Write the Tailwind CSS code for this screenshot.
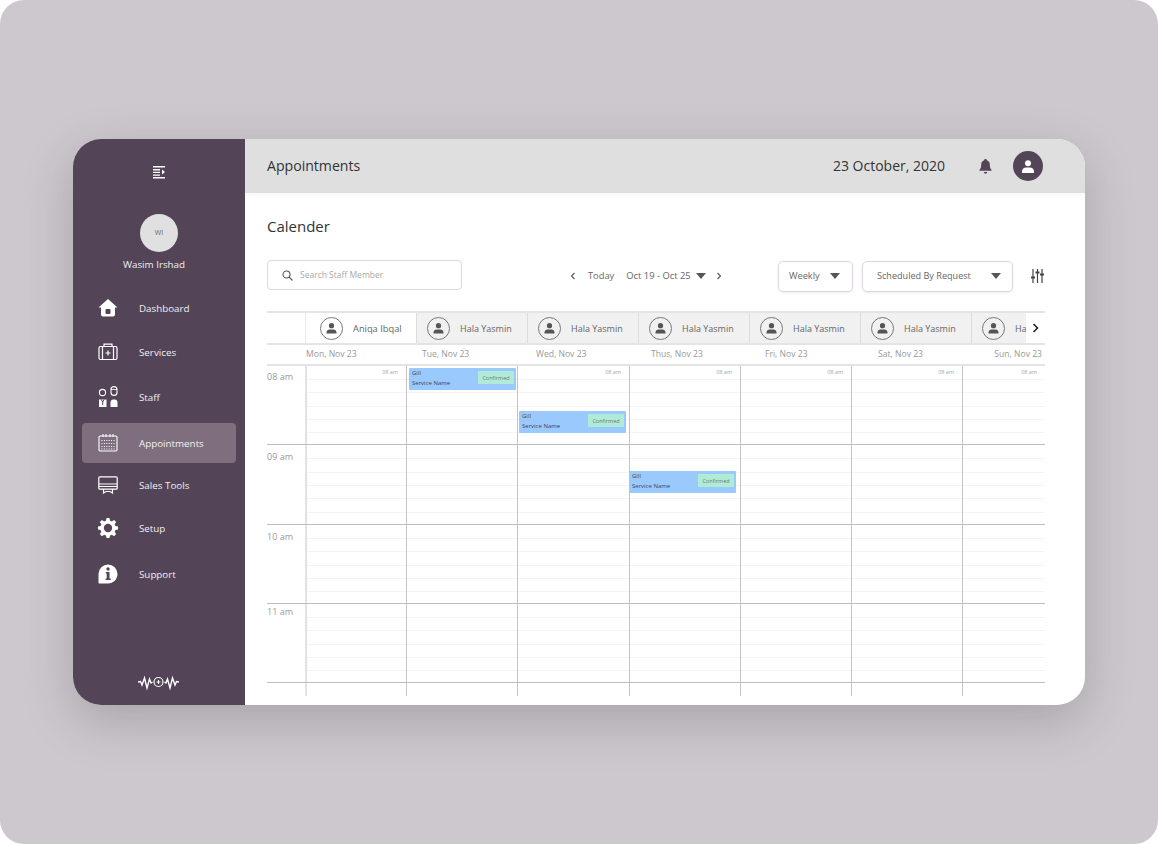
<!DOCTYPE html>
<html lang="en">
<head>
  <meta charset="UTF-8"/>
  <script src="https://cdn.jsdelivr.net/npm/@tailwindcss/browser@4"></script>
  <title>Appointments</title>
</head>
<body class="bg-white font-['Open_Sans',sans-serif] overflow-hidden">
  <div class="w-[1158px] h-[844px] bg-[#cdc8ce] rounded-[24px] pt-[139px] pl-[73px] overflow-hidden">
    <div class="w-[1012px] h-[566px] rounded-[28px] bg-white flex overflow-hidden shadow-[0_16px_50px_rgba(40,30,40,0.22)]">

      <!-- Sidebar -->
      <aside class="w-[172px] shrink-0 bg-[#534557] text-white flex flex-col items-center relative">
        <svg class="mt-[27px]" width="14" height="13" viewBox="0 0 14 13" fill="#fff"><path d="M1 0h12v1.4H1zM1 3h7v1.4H1zM1 5.7h7v1.4H1zM1 8.4h7v1.4H1zM1 11h12v1.4H1z"/><path d="M10 3.4l3 2.6-3 2.6z"/></svg>
        <div class="mt-[35px] w-[38px] h-[38px] rounded-full bg-[#e0e0e0] flex items-center justify-center text-[7px] text-[#666]">WI</div>
        <div class="mt-[5px] mr-[10px] text-[9.800px] leading-[16px] text-[#f2eff2]">Wasim Irshad</div>

        <nav class="mt-[15px] w-full text-[9.800px] text-[#f2eff2]">
          <a class="flex items-center h-[40px] mx-[9px] pl-[16px] rounded-[4px]">
            <svg width="20" height="20" viewBox="0 0 20 20" fill="#fff"><path d="M10 1L0.5 9.5h2.5v7c0 1.2.8 2 2 2h10c1.2 0 2-.8 2-2v-7h2.5z"/><rect x="7.5" y="11" width="5" height="5" rx="1" fill="#534557"/></svg>
            <span class="ml-[21px] mt-[2px]">Dashboard</span>
          </a>
          <a class="flex items-center h-[40px] mt-[4px] mx-[9px] pl-[16px] rounded-[4px]">
            <svg width="20" height="18" viewBox="0 0 20 18" fill="none" stroke="#fff" stroke-width="1.2"><rect x="1" y="3.5" width="18" height="13" rx="1.5"/><path d="M6 1.2h8v2.3H6zM4.5 3.5v13M15.500 3.5v13M10 7.500v5M7.500 10h5"/></svg>
            <span class="ml-[21px] mt-[2px]">Services</span>
          </a>
          <a class="flex items-center h-[40px] mt-[5px] mx-[9px] pl-[16px] rounded-[4px]">
            <svg width="20" height="22" viewBox="0 0 20 22" fill="none"><circle cx="4.500" cy="6.500" r="3.100" stroke="#fff" stroke-width="1.100"/><rect x="13" y=".6" width="6" height="8.800" rx="3" stroke="#fff" stroke-width="1.100"/><path d="M13 3.500h6" stroke="#fff" stroke-width=".8"/><path d="M1 13.500h7.500V21H1z" fill="#fff"/><path d="M3.200 13.500l1.500 2.500 1.500-2.500M4.700 16v3" stroke="#534557"/><path d="M12.500 21v-4.500c0-2 1.300-3 2.500-3h2c1.200 0 2.500 1 2.500 3V21z" fill="#fff"/></svg>
            <span class="ml-[21px] mt-[2px]">Staff</span>
          </a>
          <a class="flex items-center h-[40px] mt-[6px] mx-[9px] pl-[16px] rounded-[4px] bg-[#7f6f7e]">
            <svg width="20" height="18" viewBox="0 0 20 18" fill="none" stroke="#fff"><rect x="1" y="2" width="18" height="15" rx="1.200" stroke-width="1.100"/><path d="M5 0v3M8 0v3M12 0v3M15 0v3" stroke-width="1"/><path d="M3.500 6.500h13M3.500 9.500h13M3.500 12.500h13M3.500 15h13" stroke-width="1" stroke-dasharray="1 1.400"/></svg>
            <span class="ml-[21px] mt-[2px]">Appointments</span>
          </a>
          <a class="flex items-center h-[40px] mt-[2px] mx-[9px] pl-[16px] rounded-[4px]">
            <svg width="20" height="18" viewBox="0 0 20 18" fill="none" stroke="#fff"><rect x=".8" y=".8" width="18.400" height="12.400" rx="1" stroke-width="1.200"/><path d="M.8 8h18.400M.8 10.500h18.400" stroke-width="1.200"/><path d="M5.500 13v4l2.500-1.500h4L14.500 17v-4" stroke-width="1.200"/></svg>
            <span class="ml-[21px] mt-[2px]">Sales Tools</span>
          </a>
          <a class="flex items-center h-[40px] mt-[3px] mx-[9px] pl-[16px] rounded-[4px]">
            <svg width="20" height="20" viewBox="0 0 24 24" fill="#fff"><path fill-rule="evenodd" d="M13.800 0l.6 3.200c.8.2 1.500.5 2.200.9l2.700-1.800 2.500 2.500-1.800 2.700c.4.700.7 1.400.9 2.200l3.100.6v3.500l-3.100.6c-.2.8-.5 1.500-.9 2.200l1.800 2.700-2.500 2.500-2.700-1.800c-.7.4-1.400.7-2.200.9l-.6 3.200h-3.600l-.6-3.200c-.8-.2-1.500-.5-2.200-.9l-2.700 1.800-2.500-2.500 1.800-2.700c-.4-.7-.7-1.400-.9-2.200L0 13.800v-3.500l3.100-.6c.2-.8.5-1.500.9-2.200L2.200 4.800l2.500-2.500 2.700 1.800c.7-.4 1.400-.7 2.200-.9l.6-3.200zM12 7a5 5 0 100 10 5 5 0 000-10z"/></svg>
            <span class="ml-[21px] mt-[2px]">Setup</span>
          </a>
          <a class="flex items-center h-[40px] mt-[6px] mx-[9px] pl-[16px] rounded-[4px]">
            <svg width="20" height="20" viewBox="0 0 20 20" fill="#fff"><path d="M10 .5a9.500 9.500 0 019.500 9.500c0 5-4 9.500-9.500 9.500H1.500c-.6 0-1-.4-1-1V10A9.500 9.500 0 0110 .5z"/><circle cx="10" cy="5" r="1.700" fill="#534557"/><path d="M7.800 8h3.700v6.500h1.200v1.500H7.600v-1.500h1.100V9.500h-.9z" fill="#534557"/></svg>
            <span class="ml-[21px] mt-[2px]">Support</span>
          </a>
        </nav>

        <svg class="absolute bottom-[14px] left-[65px]" width="41" height="16" viewBox="0 0 41 16" fill="none" stroke="#fff" stroke-width="1.400"><path d="M0 7l2.500-.5 1.500 3.500 2.500-7 2.500 10 2.500-9 1.500 4 1.500-1"/><circle cx="20.500" cy="7" r="4.500" stroke-width="1.200"/><path d="M20.500 5v4M18.500 7h4" stroke-width="1"/><path d="M41 7l-2.500-.5-1.500 3.500-2.500-7-2.500 10-2.500-9-1.500 4-1.500-1"/></svg>
      </aside>

      <div class="flex-1 min-w-0 flex flex-col">
        <!-- Top bar -->
        <header class="h-[54px] shrink-0 bg-[#dfdfdf] flex items-center pl-[22px] pr-[42px] shadow-[0_2px_8px_rgba(0,0,0,0.04)]">
          <h1 class="text-[14.100px] text-[#333]">Appointments</h1>
          <span class="ml-auto mb-[2px] text-[14px] text-[#333]">23 October, 2020</span>
          <svg class="ml-[34px]" width="13" height="15" viewBox="0 0 13 15" fill="#534557"><path d="M6.500 0c.8 0 1.300.5 1.300 1.200 2 .6 3 2.300 3 4.300 0 3 .7 4.300 1.700 5.300v1H.5v-1c1-1 1.700-2.300 1.700-5.300 0-2 1-3.700 3-4.300C5.200.5 5.700 0 6.500 0z"/><path d="M4.800 13h3.400c0 1-.8 1.700-1.700 1.700S4.800 14 4.800 13z"/></svg>
          <div class="ml-[21px] w-[30px] h-[30px] rounded-full bg-[#534557] flex items-center justify-center">
            <svg width="12" height="13" viewBox="0 0 12 13" fill="#fff"><circle cx="6" cy="3.200" r="3"/><path d="M0 13v-1.500C0 9 2 7.500 4 7.500h4c2 0 4 1.500 4 4V13z"/></svg>
          </div>
        </header>

        <main class="flex-1 min-h-0 pl-[22px] pr-[40px] relative">
          <h2 class="mt-[22px] text-[15px] leading-[22px] text-[#333]">Calender</h2>

          <!-- Toolbar -->
          <div class="mt-[22px] h-[32px] flex items-center">
            <div class="w-[195px] h-[30px] border border-[#e0d6df] rounded-[4px] flex items-center pl-[14px]">
              <svg width="11" height="11" viewBox="0 0 11 11" fill="none" stroke="#555" stroke-width="1.100"><circle cx="4.500" cy="4.500" r="3.500"/><path d="M7.200 7.200L10.500 10.500"/></svg>
              <span class="ml-[7px] text-[8.500px] text-[#a9a9a9]">Search Staff Member</span>
            </div>
            <svg class="ml-[108px] mt-[2px]" width="6" height="8" viewBox="0 0 6 8" fill="none" stroke="#555" stroke-width="1.100"><path d="M4.500 1L1.500 4l3 3"/></svg>
            <span class="ml-[12px] mt-[2px] text-[9.300px] text-[#666]">Today</span>
            <span class="ml-[12px] mt-[2px] text-[9.400px] text-[#666] whitespace-nowrap">Oct 19 - Oct 25</span>
            <svg class="ml-[5px] mt-[2px] shrink-0" width="10" height="6" viewBox="0 0 10 6" fill="#555"><path d="M0 0h10L5 6z"/></svg>
            <svg class="ml-[10px] mt-[2px] shrink-0" width="6" height="8" viewBox="0 0 6 8" fill="none" stroke="#555" stroke-width="1.100"><path d="M1.500 1l3 3-3 3"/></svg>
            <div class="ml-auto mt-[2px] w-[75px] h-[31px] border border-[#e0d6df] rounded-[5px] flex items-center pl-[10px] shadow-[0_1px_3px_rgba(0,0,0,0.08)]">
              <span class="text-[9.200px] text-[#666]">Weekly</span>
              <svg class="ml-[10px]" width="10" height="6" viewBox="0 0 10 6" fill="#555"><path d="M0 0h10L5 6z"/></svg>
            </div>
            <div class="ml-[9px] mt-[2px] w-[151px] h-[31px] border border-[#e0d6df] rounded-[5px] flex items-center pl-[14px] shadow-[0_1px_3px_rgba(0,0,0,0.08)]">
              <span class="text-[9.100px] text-[#666]">Scheduled By Request</span>
              <svg class="ml-auto mr-[11px]" width="10" height="6" viewBox="0 0 10 6" fill="#555"><path d="M0 0h10L5 6z"/></svg>
            </div>
            <svg class="ml-[18px] mr-[1px] mt-[2px]" width="13" height="14" viewBox="0 0 13 14" fill="none" stroke="#444" stroke-width="1.200"><path d="M2 0v14M6.500 0v14M11 0v14"/><path d="M0 8.500h4M4.500 3.500h4M9 5.500h4" stroke-width="2.200"/></svg>
          </div>

          <!-- Staff tabs -->
          <div class="mt-[20px] h-[34px] border-y-2 border-[#e4e4e4] flex overflow-hidden relative w-[778px] text-[9px] text-[#666]">
            <div class="w-[38px] shrink-0"></div>
            <div class="w-[111px] shrink-0 flex items-center pl-[14px] border-l border-[#e8e8e8]">
              <svg width="23" height="23" viewBox="0 0 23 23" fill="none"><circle cx="11.500" cy="11.500" r="11" stroke="#777"/><circle cx="11.500" cy="8.700" r="2.600" fill="#555"/><path d="M6.500 16.500v-1c0-2 1.500-3 3-3h4c1.500 0 3 1 3 3v1z" fill="#555"/></svg>
              <span class="ml-[10px] mt-[2px] text-[9.300px]">Aniqa Ibqal</span>
            </div>
            <div class="w-[111px] shrink-0 flex items-center pl-[10px] bg-[#f1f1f1] border-l border-[#dddddd]">
              <svg width="23" height="23" viewBox="0 0 23 23" fill="none"><circle cx="11.500" cy="11.500" r="11" stroke="#777"/><circle cx="11.500" cy="8.700" r="2.600" fill="#555"/><path d="M6.500 16.500v-1c0-2 1.500-3 3-3h4c1.500 0 3 1 3 3v1z" fill="#555"/></svg>
              <span class="ml-[10px] mt-[2px]">Hala Yasmin</span>
            </div>
            <div class="w-[111px] shrink-0 flex items-center pl-[10px] bg-[#f1f1f1] border-l border-[#dddddd]">
              <svg width="23" height="23" viewBox="0 0 23 23" fill="none"><circle cx="11.500" cy="11.500" r="11" stroke="#777"/><circle cx="11.500" cy="8.700" r="2.600" fill="#555"/><path d="M6.500 16.500v-1c0-2 1.500-3 3-3h4c1.500 0 3 1 3 3v1z" fill="#555"/></svg>
              <span class="ml-[10px] mt-[2px]">Hala Yasmin</span>
            </div>
            <div class="w-[111px] shrink-0 flex items-center pl-[10px] bg-[#f1f1f1] border-l border-[#dddddd]">
              <svg width="23" height="23" viewBox="0 0 23 23" fill="none"><circle cx="11.500" cy="11.500" r="11" stroke="#777"/><circle cx="11.500" cy="8.700" r="2.600" fill="#555"/><path d="M6.500 16.500v-1c0-2 1.500-3 3-3h4c1.500 0 3 1 3 3v1z" fill="#555"/></svg>
              <span class="ml-[10px] mt-[2px]">Hala Yasmin</span>
            </div>
            <div class="w-[111px] shrink-0 flex items-center pl-[10px] bg-[#f1f1f1] border-l border-[#dddddd]">
              <svg width="23" height="23" viewBox="0 0 23 23" fill="none"><circle cx="11.500" cy="11.500" r="11" stroke="#777"/><circle cx="11.500" cy="8.700" r="2.600" fill="#555"/><path d="M6.500 16.500v-1c0-2 1.500-3 3-3h4c1.500 0 3 1 3 3v1z" fill="#555"/></svg>
              <span class="ml-[10px] mt-[2px]">Hala Yasmin</span>
            </div>
            <div class="w-[111px] shrink-0 flex items-center pl-[10px] bg-[#f1f1f1] border-l border-[#dddddd]">
              <svg width="23" height="23" viewBox="0 0 23 23" fill="none"><circle cx="11.500" cy="11.500" r="11" stroke="#777"/><circle cx="11.500" cy="8.700" r="2.600" fill="#555"/><path d="M6.500 16.500v-1c0-2 1.500-3 3-3h4c1.500 0 3 1 3 3v1z" fill="#555"/></svg>
              <span class="ml-[10px] mt-[2px]">Hala Yasmin</span>
            </div>
            <div class="w-[111px] shrink-0 flex items-center pl-[10px] bg-[#f1f1f1] border-l border-[#dddddd]">
              <svg class="shrink-0" width="23" height="23" viewBox="0 0 23 23" fill="none"><circle cx="11.500" cy="11.500" r="11" stroke="#777"/><circle cx="11.500" cy="8.700" r="2.600" fill="#555"/><path d="M6.500 16.500v-1c0-2 1.500-3 3-3h4c1.500 0 3 1 3 3v1z" fill="#555"/></svg>
              <span class="ml-[10px] mt-[2px] whitespace-nowrap">Hala Yasmin</span>
            </div>
            <div class="absolute right-0 top-0 bottom-0 w-[19px] bg-white flex items-center justify-center">
              <svg width="7" height="10" viewBox="0 0 7 10" fill="none" stroke="#222" stroke-width="1.600"><path d="M1.500 1l4 4-4 4"/></svg>
            </div>
          </div>

          <!-- Day headers -->
          <div class="h-[21px] w-[778px] flex items-center text-[8.600px] text-[#9a9a9a] border-b-2 border-[#e4e4e4]">
            <div class="w-[39px] shrink-0"></div>
            <div class="w-[101px] shrink-0">Mon, Nov 23</div>
            <div class="w-[114px] shrink-0 pl-[15px]">Tue, Nov 23</div>
            <div class="w-[112px] shrink-0 pl-[15px]">Wed, Nov 23</div>
            <div class="w-[111px] shrink-0 pl-[18px]">Thus, Nov 23</div>
            <div class="w-[111px] shrink-0 pl-[21px]">Fri, Nov 23</div>
            <div class="w-[111px] shrink-0 pl-[23px]">Sat, Nov 23</div>
            <div class="flex-1 text-right pr-[3px]">Sun, Nov 23</div>
          </div>

          <!-- Calendar grid, filled by the script below -->
          <div id="grid" class="w-[778px]"></div>
        </main>
      </div>
    </div>
  </div>

  <script>
    const hours = [
      { label: '08 am', h: 79, labelTop: 'pt-[4px]' },
      { label: '09 am', h: 80, labelTop: 'pt-[5px]' },
      { label: '10 am', h: 79, labelTop: 'pt-[5px]' },
      { label: '11 am', h: 79, labelTop: 'pt-px' },
      { label: '', h: 13, labelTop: 'pt-0' }
    ];
    const colWidths = [101, 111, 112, 111, 111, 111, 83];
    const events = [
      { row: 0, col: 1, top: 2, left: 2 },
      { row: 0, col: 2, top: 45, left: 1 },
      { row: 1, col: 3, top: 26, left: -1 }
    ];
    const grid = document.getElementById('grid');

    hours.forEach((hour, r) => {
      const row = document.createElement('div');
      row.className = 'flex border-b border-[#bdbdbd]';
      row.style.height = hour.h + 'px';
      if (r === hours.length - 1) row.className = 'flex';

      const label = document.createElement('div');
      label.className = 'w-[38px] shrink-0 text-[9px] leading-[14px] text-[#9a9a9a] ' + hour.labelTop;
      label.textContent = hour.label;
      row.appendChild(label);

      colWidths.forEach((w, c) => {
        const cell = document.createElement('div');
        cell.className = 'relative shrink-0 border-l border-[#c4c4c4]';
        if (c === 0) cell.className = 'relative shrink-0 border-l-2 border-[#e2e2e2]';
        cell.style.width = w + 'px';

        const lines = r === hours.length - 1 ? 0 : 5;
        for (let i = 1; i <= lines; i++) {
          const line = document.createElement('div');
          line.className = 'absolute left-0 right-0 h-px bg-[#f4f4f4]';
          line.style.top = Math.round(i * hour.h / 6) + 'px';
          cell.appendChild(line);
        }

        // the event in the Tue column covers this label
        if (r === 0 && c !== 1) {
          const small = document.createElement('div');
          small.className = 'absolute top-[2px] right-[8px] text-[5.500px] leading-[8px] text-[#a5a5a5]';
          small.textContent = '08 am';
          cell.appendChild(small);
        }

        events.filter(e => e.row === r && e.col === c).forEach(e => {
          const ev = document.createElement('div');
          ev.className = 'absolute z-10 w-[107px] h-[22px] bg-[#99c9fd] rounded-[1px] text-[6px] leading-[8px] text-[#445] pl-[3px] pt-px';
          ev.style.top = e.top + 'px';
          ev.style.left = e.left + 'px';
          ev.innerHTML = '<div>Gill</div><div class="mt-[2px]">Service Name</div>' +
            '<div class="absolute top-[3px] right-[2px] w-[36px] h-[13px] bg-[#b0ebd8] text-[#6a7a76] text-[5.500px] flex items-center justify-center">Confirmed</div>';
          cell.appendChild(ev);
        });

        row.appendChild(cell);
      });
      grid.appendChild(row);
    });
  </script>
</body>
</html>
